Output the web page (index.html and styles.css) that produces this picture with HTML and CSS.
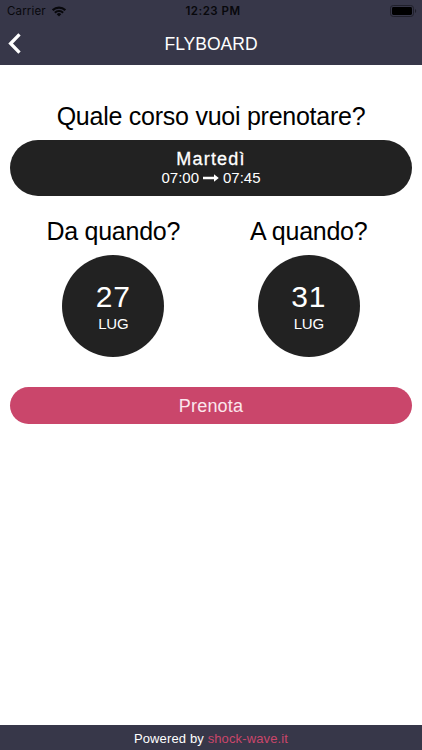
FILE: index.html
```html
<!DOCTYPE html>
<html lang="it">
  <head>
    <meta charset="UTF-8" />
    <meta name="viewport" content="width=device-width, initial-scale=1.0" />
    <title>Flyboard</title>
    <link rel="stylesheet" href="styles.css">
  </head>
  <body>
    <header class="header">
      <div class="status-bar">
        <div class="carrier">
          <span>Carrier</span>
          <svg width="14" height="11" viewBox="0 0 14 11" fill="none" stroke="#08080c" stroke-width="2.2">
            <path d="M.7 4.1a9 9 0 0 1 12.6 0M2.9 6.7a5.8 5.8 0 0 1 8.2 0" />
            <path d="M7 10.6 4.7 8.3a3.2 3.2 0 0 1 4.6 0z" fill="#08080c" stroke="none" />
          </svg>
        </div>
        <span class="time">12:23 PM</span>
        <div class="battery">
          <svg width="27" height="12" viewBox="0 0 27 12">
            <rect x=".5" y=".5" width="23" height="11" rx="2.8" fill="none" stroke="#20202b" />
            <rect x="2" y="2" width="20" height="8" rx="1.4" fill="#000" />
            <path d="M25 4c1.6.7 1.6 3.3 0 4z" fill="#20202b" />
          </svg>
        </div>
      </div>
      <div class="nav-bar">
        <a class="back" href="#" aria-label="Indietro">
          <svg width="14" height="21" viewBox="0 0 14 21" fill="none" stroke="#fff" stroke-width="3.3">
            <path d="M11.5 1.4 2.6 10.5l8.9 9.1" />
          </svg>
        </a>
        <h1>FLYBOARD</h1>
      </div>
    </header>

    <main class="content">
      <h2 class="question">Quale corso vuoi prenotare?</h2>
      <button class="course">
        <span class="day">Martedì</span>
        <span class="hours">
          07:00
          <svg width="16" height="8" viewBox="0 0 16 8" fill="#fff">
            <path d="M0 2.7h11V.2L15.8 4 11 7.8V5.3H0z" />
          </svg>
          07:45
        </span>
      </button>

      <div class="dates">
        <div class="date">
          <h2>Da quando?</h2>
          <button class="circle">
            <span class="number">27</span>
            <span class="month">LUG</span>
          </button>
        </div>
        <div class="date">
          <h2>A quando?</h2>
          <button class="circle">
            <span class="number">31</span>
            <span class="month">LUG</span>
          </button>
        </div>
      </div>

      <button class="book">Prenota</button>
    </main>

    <footer class="footer">
      <p>Powered by <a href="#">shock-wave.it</a></p>
    </footer>
  </body>
</html>
```

FILE: styles.css
```css
* {
  margin: 0;
  padding: 0;
  box-sizing: border-box;
  font-family: "Liberation Sans", Arial, sans-serif;
}
body {
  display: flex;
  flex-direction: column;
  height: 100vh;
  background: #fff;
  color: #000;
}
svg {
  display: block;
}
button {
  border: none;
  color: #fff;
  cursor: pointer;
}
h1,
h2 {
  font-weight: normal;
}
a {
  text-decoration: none;
}
.header {
  height: 65px;
  background: #373749;
}
.status-bar {
  display: grid;
  grid-template-columns: 1fr auto 1fr;
  align-items: center;
  height: 22px;
  padding: 0 5px 0 7px;
  color: #08080c;
}
.carrier {
  display: flex;
  align-items: center;
  gap: 6px;
}
.carrier span {
  font-family: Inter, sans-serif;
  font-size: 11.5px;
  letter-spacing: 0.15px;
}
.time {
  padding-left: 2px;
  font-family: Inter, sans-serif;
  font-size: 11.5px;
  font-weight: 600;
  letter-spacing: 0.5px;
}
.battery {
  justify-self: end;
}
.nav-bar {
  display: grid;
  grid-template-columns: 1fr auto 1fr;
  align-items: center;
  height: 43px;
  padding: 0 8px;
}
.nav-bar h1 {
  padding-top: 2px;
  color: #fff;
  font-size: 17.5px;
}
.content {
  flex: 1;
  display: flex;
  flex-direction: column;
  padding: 35px 10px 0;
}
h2 {
  font-size: 25px;
  line-height: 32px;
  letter-spacing: -0.25px;
  text-align: center;
}
.question {
  margin-bottom: 7.5px;
}
.course {
  display: flex;
  flex-direction: column;
  align-items: center;
  height: 56px;
  padding-top: 9px;
  border-radius: 28px;
  background: #222;
}
.day {
  font-size: 18px;
  line-height: 20px;
  letter-spacing: 1.2px;
  -webkit-text-stroke: 0.3px #fff;
}
.hours {
  display: flex;
  align-items: center;
  gap: 4px;
  font-size: 15px;
  line-height: 18px;
}
.dates {
  display: flex;
  justify-content: center;
  margin-top: 19.5px;
}
.date {
  display: flex;
  flex-direction: column;
  align-items: center;
  width: 195.5px;
}
.circle {
  display: flex;
  flex-direction: column;
  align-items: center;
  width: 102px;
  height: 102px;
  margin-top: 7.5px;
  padding-top: 25px;
  border-radius: 50%;
  background: #222;
}
.number {
  font-size: 30px;
  line-height: 34px;
  letter-spacing: 0.8px;
}
.month {
  font-size: 15px;
  line-height: 20px;
  letter-spacing: -0.2px;
}
.book {
  height: 37px;
  margin-top: 30.5px;
  padding-top: 2px;
  border-radius: 19px;
  background: #ca466b;
  color: #fbe6ed;
  font-size: 18px;
  letter-spacing: 0.2px;
}
.footer {
  height: 25px;
  background: #373749;
  color: #fff;
  font-size: 13px;
  line-height: 27px;
  letter-spacing: 0.13px;
  text-align: center;
}
.footer a {
  color: #ca466b;
}
```
